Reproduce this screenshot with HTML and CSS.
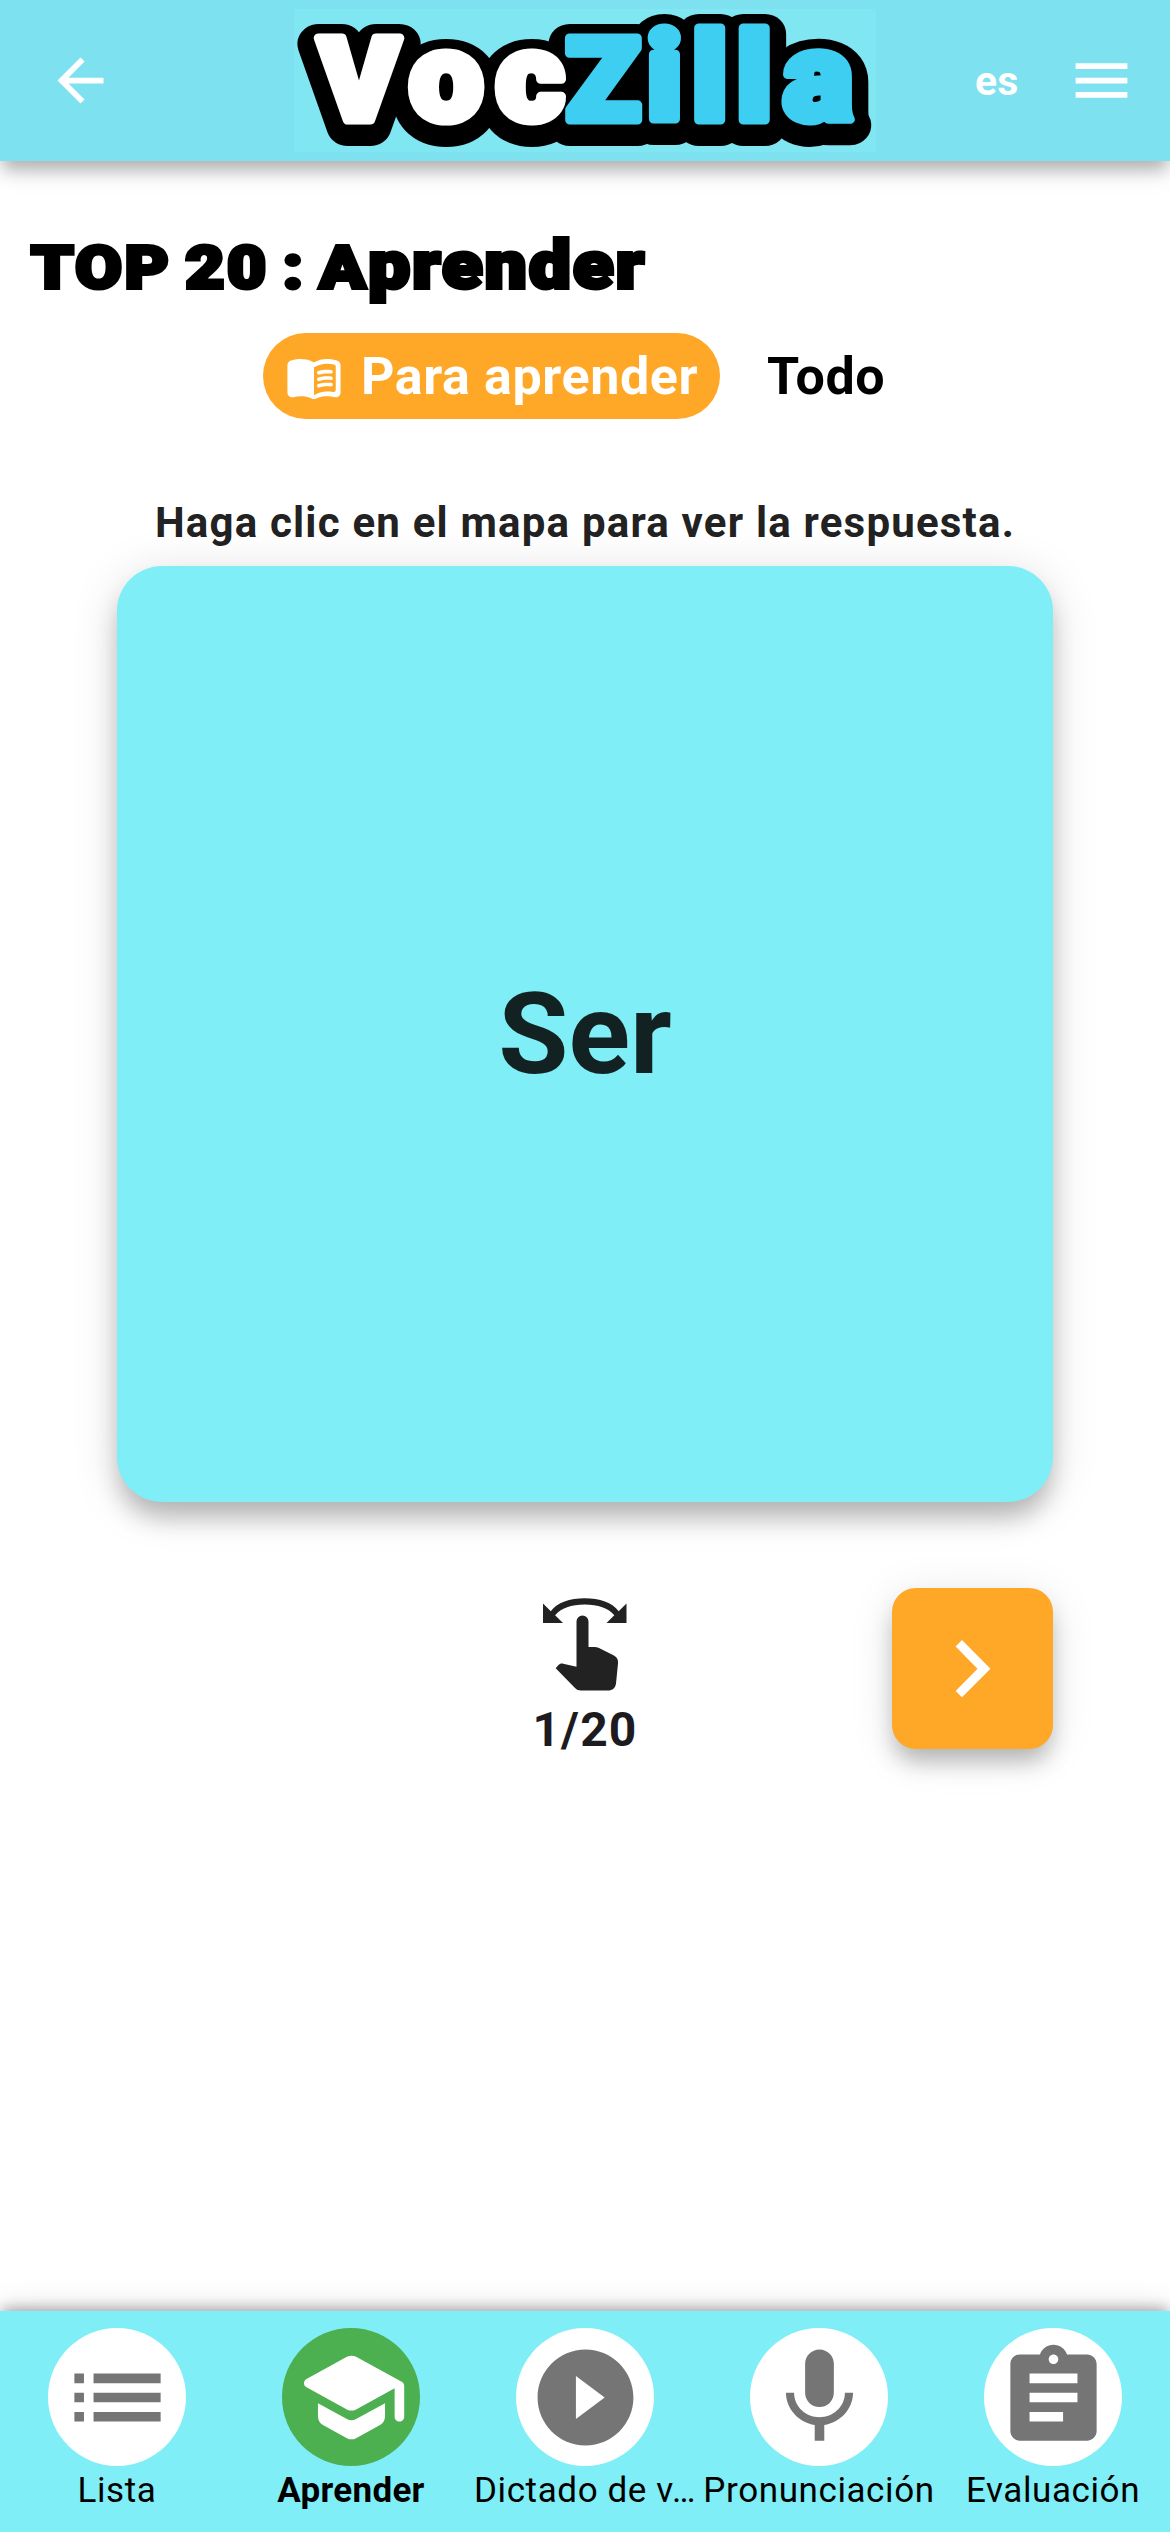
FILE: index.html
```html
<!DOCTYPE html>
<html lang="es">
<head>
<meta charset="utf-8">
<title>VocZilla</title>
<link rel="stylesheet" href="styles.css">
</head>
<body>
<header class="topbar">
  <svg class="back" viewBox="0 0 24 24"><path d="M20 11H7.83l5.59-5.59L12 4l-8 8 8 8 1.41-1.41L7.83 13H20v-2z"/></svg>
  <svg class="logo" viewBox="294 9 582 143">
    <use class="logo-edge" href="#word" y="6"/>
    <use class="logo-inner" href="#word"/>
    <g class="logo-face"><text id="word" y="120.5" transform="scale(1.06 1)"><tspan class="cap" x="300.7">V</tspan><tspan class="low" x="386 468">oc</tspan><tspan class="cap blue" x="534">Z</tspan><tspan class="tall blue" x="610 652.5 694.5">ill</tspan><tspan class="low blue" x="739">a</tspan></text></g>
  </svg>
  <span class="lang">es</span>
  <svg class="menu" viewBox="0 0 24 24"><path d="M3 18h18v-2H3v2zm0-5h18v-2H3v2zm0-7v2h18V6H3z"/></svg>
</header>
<main class="content">
  <h1 class="title">TOP 20 : A<span class="title-low">prender</span></h1>
  <div class="tabs">
    <div class="tab tab-active">
      <svg class="book" viewBox="0 0 24 24"><path d="M17.5 4.5c-1.95 0-4.05.4-5.5 1.5-1.45-1.1-3.55-1.5-5.5-1.5-1.45 0-2.99.22-4.28.79C1.49 5.62 1 6.33 1 7.14v11.28c0 1.3 1.22 2.26 2.48 1.94.98-.25 2.02-.36 3.02-.36 1.56 0 3.22.26 4.56.92.6.3 1.28.3 1.87 0 1.34-.67 3-.92 4.56-.92 1 0 2.04.11 3.02.36 1.26.33 2.48-.63 2.48-1.94V7.14c0-.81-.49-1.52-1.22-1.85-1.28-.57-2.82-.79-4.27-.79zM21 17.23c0 .63-.58 1.09-1.2.98-.75-.14-1.53-.2-2.3-.2-1.7 0-4.15.65-5.5 1.5V8c1.35-.85 3.8-1.5 5.5-1.5.92 0 1.83.09 2.7.28.46.1.8.51.8.98v9.47z"/><path id="line" d="M13.98 11.01c-.32 0-.61-.2-.71-.52-.13-.39.09-.82.48-.94 1.54-.5 3.53-.66 5.36-.45.41.05.71.42.66.83-.05.41-.42.71-.83.66-1.62-.19-3.39-.04-4.73.39-.08.01-.16.03-.23.03z"/><use href="#line" y="2.66"/><use href="#line" y="5.32"/></svg>
      <span class="tab-text">Para aprender</span>
    </div>
    <div class="tab"><span class="tab-text">Todo</span></div>
  </div>
  <p class="hint">Haga clic en el mapa para ver la respuesta.</p>
  <div class="card"><span class="word">Ser</span></div>
  <div class="controls">
    <div class="progress">
      <svg class="swipe" viewBox="61 37 86 95"><path d="M62 43.5l7.8 7.8C76 42.500 89 38.300 103.700 38.300S131.500 42.500 137.700 51.300l7.800-7.800V63h-20l7.800-7.800C127.500 48.300 117 44.500 103.700 44.500S80 48.300 74.100 55.200L82 63H62z"/><path d="M95.500 61.500a6 6 0 0 1 12 0V87h6c1.500 0 3 .4 4.500 1.100l14 7c3.500 1.800 5.400 4 5 8.500l-2 20c-.6 4.500-3.500 7-8 7h-27c-2.500 0-4.500-.8-6-2.500L74.700 108.300l2.500-3c1.500-1.600 3-2 5-1.600l13.300 3z"/></svg>
      <span class="count">1/20</span>
    </div>
    <div class="next"><svg class="chevron" viewBox="0 0 36 58"><path d="M7 0L0.600 6.500 22.500 28.700 0.600 51 7 57.200 35.500 28.700z"/></svg></div>
  </div>
</main>
<nav class="bottom">
  <div class="item"><div class="disc"><svg viewBox="0 0 24 24"><path d="M3 13h2v-2H3v2zm0 4h2v-2H3v2zm0-8h2V7H3v2zm4 4h14v-2H7v2zm0 4h14v-2H7v2zM7 7v2h14V7H7z"/></svg></div><span class="label">Lista</span></div>
  <div class="item current"><div class="disc"><svg viewBox="0 0 24 24"><path d="M5 13.180v2.810c0 .73.4 1.410 1.040 1.760l5 2.730c.6.33 1.320.33 1.920 0l5-2.730c.64-.35 1.040-1.030 1.040-1.760v-2.810l-6.040 3.300c-.6.33-1.320.33-1.920 0L5 13.180zm6.040-9.660l-8.430 4.600c-.69.38-.69 1.380 0 1.760l8.430 4.600c.6.33 1.320.33 1.920 0L21 10.090V16c0 .55.45 1 1 1s1-.45 1-1V9.590c0-.37-.2-.7-.52-.88l-9.520-5.190c-.6-.32-1.320-.32-1.920 0z"/></svg></div><span class="label">Aprender</span></div>
  <div class="item"><div class="disc"><svg viewBox="0 0 24 24"><path d="M12 2C6.480 2 2 6.480 2 12s4.480 10 10 10 10-4.480 10-10S17.520 2 12 2zm-2 14.500v-9l6 4.500-6 4.500z"/></svg></div><span class="label">Dictado de v…</span></div>
  <div class="item"><div class="disc"><svg viewBox="0 0 24 24"><path d="M12 14c1.660 0 2.990-1.340 2.990-3L15 5c0-1.660-1.340-3-3-3S9 3.340 9 5v6c0 1.660 1.340 3 3 3zm5.300-3c0 3-2.540 5.100-5.300 5.100S6.700 14 6.700 11H5c0 3.410 2.720 6.230 6 6.720V21h2v-3.280c3.280-.48 6-3.300 6-6.720h-1.700z"/></svg></div><span class="label">Pronunciación</span></div>
  <div class="item"><div class="disc"><svg viewBox="0 0 24 24"><path d="M19 3h-4.180C14.400 1.840 13.300 1 12 1c-1.300 0-2.400.84-2.820 2H5c-1.100 0-2 .9-2 2v14c0 1.100.9 2 2 2h14c1.100 0 2-.9 2-2V5c0-1.100-.9-2-2-2zm-7 0c.55 0 1 .45 1 1s-.45 1-1 1-1-.45-1-1 .45-1 1-1zm2 14H7v-2h7v2zm3-4H7v-2h10v2zm0-4H7V7h10v2z"/></svg></div><span class="label">Evaluación</span></div>
</nav>
</body>
</html>
```
FILE: styles.css
```css
* { box-sizing: border-box; }
body { margin: 0; width: 1170px; height: 2532px; display: flex; flex-direction: column; background: #fff; font-family: Roboto, "Liberation Sans", sans-serif; color: #222; overflow: hidden; }
svg { display: block; flex: none; fill: currentColor; }

.topbar { height: 161px; flex: none; display: flex; align-items: center; padding: 0 34px 0 46px; background: #7de1f0; color: #fff; box-shadow: 0 12px 15px -3px rgba(0,0,0,.24), 0 6px 30px 0 rgba(0,0,0,.12); }
.back { width: 69px; height: 69px; }
.logo { width: 582px; height: 143px; margin-left: 179px; background: #7fe6f2; }
.logo text { font-family: Roboto, sans-serif; font-weight: 900; stroke-linejoin: round; }
.cap { font-size: 115px; }
.low { font-size: 124px; }
.tall { font-size: 123px; }
.logo-edge { --accent: #000; fill: #000; stroke: #000; stroke-width: 40px; }
.logo-inner { --accent: #000; fill: #000; stroke: #000; stroke-width: 22px; }
.logo-face { --accent: #3dcef2; fill: #fff; stroke: #fff; stroke-width: 9px; }
.blue { fill: var(--accent); stroke: var(--accent); }
.lang { margin-left: 99px; width: 42px; font-size: 41px; font-weight: 700; line-height: 48px; }
.menu { width: 69px; height: 69px; margin-left: auto; }

.content { flex: 1; display: flex; flex-direction: column; align-items: center; padding-top: 70px; }
.title { align-self: flex-start; margin: 0 0 0 31px; height: 74px; font-size: 60px; line-height: 74px; font-weight: 900; letter-spacing: 2.4px; word-spacing: -5px; color: #000; -webkit-text-stroke: 4px #000; white-space: nowrap; transform: scaleX(1.125); transform-origin: left; }
.title-low { font-size: 66px; line-height: 0; letter-spacing: 2px; }
.tabs { display: flex; align-self: stretch; margin-top: 28px; padding-left: 263px; }
.tab { height: 86px; display: flex; align-items: center; padding: 0 23px; border-radius: 43px; color: #000; margin-left: 24px; }
.tab-active { width: 457px; margin-left: 0; background: #ffa726; color: #fff; }
.book { width: 58px; height: 58px; margin: 2px 18px 0 -1px; }
.tab-text { font-size: 52px; font-weight: 700; line-height: 62px; letter-spacing: .6px; white-space: nowrap; padding-top: 1px; }
.hint { margin: 79px 0 0; font-size: 42px; font-weight: 700; line-height: 50px; letter-spacing: 1.2px; }
.card { width: 936px; height: 936px; margin-top: 18px; display: flex; align-items: center; justify-content: center; background: #80eef6; border-radius: 45px; box-shadow: 0 18px 24px -3px rgba(0,0,0,.24), 0 6px 48px 0 rgba(0,0,0,.13); }
.word { font-size: 114px; font-weight: 700; color: #122222; line-height: 134px; }
.controls { width: 936px; margin-top: 86px; display: grid; grid-template-columns: 161px 1fr 161px; }
.progress { grid-column: 2; display: flex; flex-direction: column; align-items: center; }
.swipe { width: 86px; height: 95px; margin-top: 9px; }
.count { margin-top: 10px; font-size: 48px; line-height: 56px; font-weight: 700; letter-spacing: 1.2px; color: #1d1b20; }
.next { height: 161px; display: flex; align-items: center; justify-content: center; background: #ffa726; border-radius: 24px; color: #fff; box-shadow: 0 15px 22px -3px rgba(0,0,0,.25), 0 6px 45px 0 rgba(0,0,0,.1); }
.chevron { width: 36px; height: 58px; }

.bottom { height: 221px; flex: none; display: grid; grid-template-columns: repeat(5, minmax(0, 1fr)); background: #80eef6; color: #000; box-shadow: 0 -6px 12px -3px rgba(0,0,0,.2), 0 0 15px 0 rgba(0,0,0,.14), 0 -3px 30px 0 rgba(0,0,0,.12); }
.item { display: flex; flex-direction: column; align-items: center; padding-top: 17px; }
.disc { width: 138px; height: 138px; border-radius: 50%; background: #fff; color: #757575; display: flex; align-items: center; justify-content: center; }
.disc svg { width: 115px; height: 115px; }
.label { margin-top: 5px; font-size: 35px; line-height: 40px; letter-spacing: .6px; white-space: nowrap; }
.current .disc { background: #4caf50; color: #fff; }
.current .label { font-weight: 700; letter-spacing: .3px; }
```
